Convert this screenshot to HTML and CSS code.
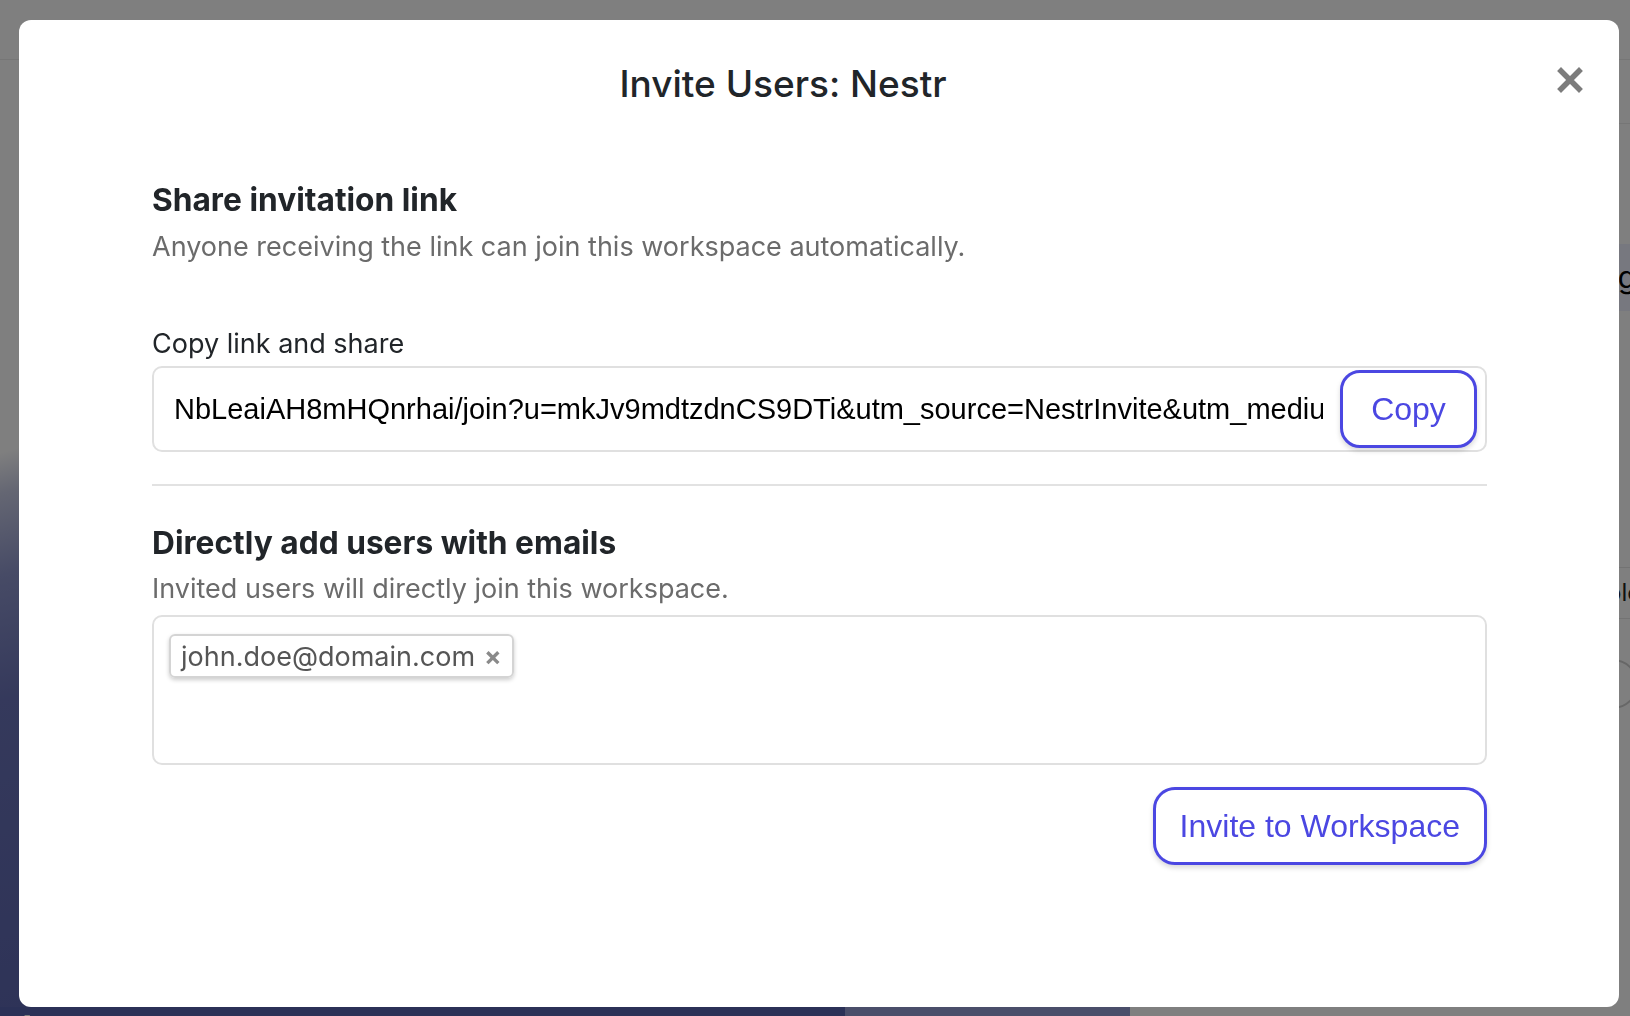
FILE: index.html
```html
<!DOCTYPE html>
<html>
  <head>
    <meta charset="utf-8">
    <title>Invite Users: Nestr</title>
    <link rel="stylesheet" href="styles.css">
  </head>
  <body>
    <div class="app">
      <div class="app-top"></div>
      <div class="app-main">
        <div class="app-side"></div>
        <div class="app-content"></div>
        <div class="app-panel">
          <div class="panel-row"></div>
          <div class="panel-band">Settings</div>
          <div class="panel-item">Role</div>
          <div class="panel-circle"></div>
        </div>
      </div>
      <div class="app-bottom">
        <span class="bottom-dark">lootr</span>
        <span class="bottom-mid"></span>
      </div>
    </div>

    <div class="overlay">
      <div class="modal">
        <div class="modal-header">
          <h2 class="modal-title">Invite Users: Nestr</h2>
          <button class="modal-close" title="Close">
            <svg viewBox="0 0 26 26" width="26" height="26">
              <path d="M4 4 L22 22 M22 4 L4 22" stroke="#7c7c7c" stroke-width="5.5" stroke-linecap="square" fill="none" />
            </svg>
          </button>
        </div>

        <div class="modal-body">
          <section class="invite-section">
            <h3 class="section-title">Share invitation link</h3>
            <p class="section-desc">Anyone receiving the link can join this workspace automatically.</p>
            <div class="field-label">Copy link and share</div>
            <div class="link-field">
              <span class="link-text">NbLeaiAH8mHQnrhai/join?u=mkJv9mdtzdnCS9DTi&amp;utm_source=NestrInvite&amp;utm_medium=invite</span>
              <button class="outline-btn copy-btn">Copy</button>
            </div>
          </section>

          <hr class="divider">

          <section class="invite-section">
            <h3 class="section-title">Directly add users with emails</h3>
            <p class="section-desc section-desc-tight">Invited users will directly join this workspace.</p>
            <div class="email-box">
              <span class="email-tag">john.doe@domain.com <span class="tag-remove">×</span></span>
            </div>
            <div class="actions">
              <button class="outline-btn invite-btn">Invite to Workspace</button>
            </div>
          </section>
        </div>
      </div>
    </div>
  </body>
</html>
```

FILE: styles.css
```css
body {
  margin: 0;
  font-family: Inter, "Noto Sans", sans-serif;
  color: #212529;
  overflow: hidden;
}

/* app behind the dialog */
.app {
  height: 100vh;
  display: flex;
  flex-direction: column;
  background: #ffffff;
}

.app-top {
  height: 59px;
  flex-shrink: 0;
  border-bottom: 1px solid #ececec;
}

.app-main {
  flex: 1;
  display: flex;
  min-height: 0;
}

.app-side {
  width: 320px;
  background: linear-gradient(165deg, #ffffff 0 38%, #c9cde6 42%, #8e96cc 50%, #6a73b8 62%, #5a64ae 100%);
}

.app-content {
  flex: 1;
}

.app-panel {
  width: 220px;
  display: flex;
  flex-direction: column;
}

.panel-row {
  height: 63px;
  flex-shrink: 0;
  border-bottom: 1px solid #ececec;
}

.panel-band {
  height: 67px;
  flex-shrink: 0;
  margin-top: 120px;
  background: #eef0ff;
  font-size: 30px;
  line-height: 67px;
  padding-left: 127px;
  white-space: nowrap;
  overflow: hidden;
  color: #000;
}

.panel-item {
  height: 50px;
  flex-shrink: 0;
  margin-top: 256px;
  border-top: 1px solid #e6e6e6;
  border-bottom: 1px solid #e6e6e6;
  font-size: 24px;
  line-height: 50px;
  padding-left: 182px;
  white-space: nowrap;
  overflow: hidden;
  color: #222;
}

.panel-circle {
  width: 46px;
  height: 46px;
  flex-shrink: 0;
  margin: 40px 0 0 178px;
  border: 2px solid #cfcfcf;
  border-radius: 50%;
}

.app-bottom {
  height: 9px;
  flex-shrink: 0;
  display: flex;
  overflow: hidden;
}

.bottom-dark {
  width: 845px;
  background: #5662ae;
  color: #ffffff;
  font-size: 60px;
  line-height: 1;
  padding-left: 20px;
  box-sizing: border-box;
}

.bottom-mid {
  width: 285px;
  background: #959cd4;
}

/* dialog */
.overlay {
  position: fixed;
  inset: 0;
  background: rgba(0, 0, 0, 0.5);
  display: flex;
  padding: 20px 11px 9px 19px;
  box-sizing: border-box;
}

.modal {
  flex: 1;
  min-width: 0;
  background: #ffffff;
  border-radius: 12px;
  display: flex;
  flex-direction: column;
}

.modal-header {
  display: flex;
  align-items: flex-start;
  padding-top: 41px;
}

.modal-title {
  flex: 1;
  margin: 0;
  text-align: center;
  font-size: 37px;
  line-height: 45px;
  font-weight: 500;
  color: #212529;
}

.modal-close {
  width: 26px;
  height: 26px;
  margin: 6px 36px 0 10px;
  padding: 0;
  border: 0;
  background: none;
  display: flex;
}

.modal-body {
  padding: 0 132px 0 133px;
}

.invite-section:first-child {
  margin-top: 75px;
}

.section-title {
  margin: 0;
  font-size: 31.7px;
  line-height: 38px;
  font-weight: 700;
  color: #212529;
}

.section-desc {
  margin: 11px 0 0;
  font-size: 27px;
  line-height: 34px;
  color: #6b6b6b;
}

.section-desc-tight {
  margin-top: 10px;
}

.field-label {
  margin-top: 63px;
  font-size: 27px;
  line-height: 34px;
  color: #212529;
}

.link-field {
  margin-top: 5px;
  height: 86px;
  box-sizing: border-box;
  border: 2px solid #e0e0e0;
  border-radius: 10px;
  display: flex;
  align-items: center;
  padding: 0 8px 0 20px;
}

.link-text {
  flex: 1;
  min-width: 0;
  overflow: hidden;
  white-space: nowrap;
  margin-right: 17px;
  font-family: "Liberation Sans", Arial, sans-serif;
  font-size: 29px;
  color: #000000;
}

.outline-btn {
  height: 78px;
  box-sizing: border-box;
  background: #ffffff;
  border: 3px solid #4b47e2;
  color: #4b47e2;
  font-family: "Liberation Sans", Arial, sans-serif;
  font-size: 32px;
  box-shadow: 0 3px 5px rgba(0, 0, 0, 0.15);
  cursor: pointer;
}

.copy-btn {
  width: 137px;
  flex-shrink: 0;
  border-radius: 20px;
}

.divider {
  margin: 32px 0 38px;
  border: 0;
  height: 2px;
  background: #e2e2e2;
}

.email-box {
  margin-top: 9px;
  height: 150px;
  box-sizing: border-box;
  border: 2px solid #e0e0e0;
  border-radius: 10px;
  padding: 17px 15px;
}

.email-tag {
  display: inline-flex;
  align-items: center;
  gap: 9px;
  height: 44px;
  box-sizing: border-box;
  padding: 0 10px;
  border: 2px solid #d4d4d4;
  border-radius: 6px;
  box-shadow: 0 2px 4px rgba(0, 0, 0, 0.2);
  font-size: 27px;
  color: #555555;
}

.tag-remove {
  font-size: 26px;
  font-weight: 700;
  color: #8a8a8a;
}

.actions {
  display: flex;
  justify-content: flex-end;
  margin-top: 22px;
}

.invite-btn {
  padding: 0 24px;
  border-radius: 22px;
}
```
